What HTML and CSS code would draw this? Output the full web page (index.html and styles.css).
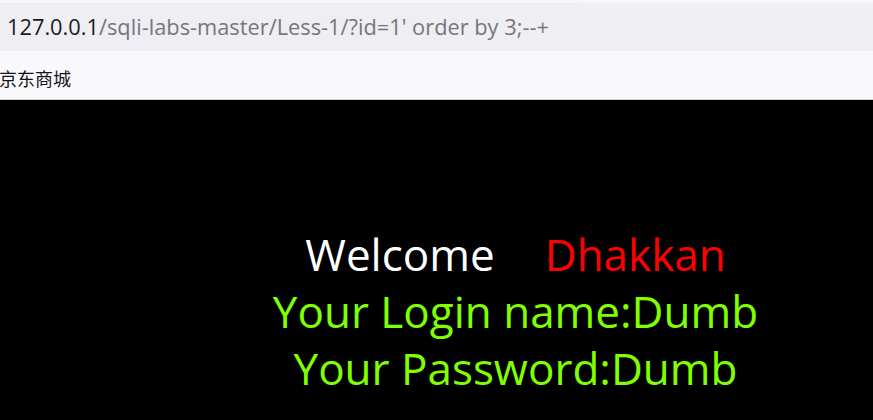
FILE: index.html
```html
<!DOCTYPE html>
<html>
<head>
<meta charset="utf-8">
<link rel="stylesheet" href="styles.css">
</head>
<body>
<div class="chrome">
  <div class="addressbar">
    <div class="url"><span class="host">127.0.0.1</span><span class="path">/sqli-labs-master/Less-1/?id=1' order by 3;--+</span></div>
    <div class="url-rest"></div>
  </div>
  <div class="bookmarks"><span class="bm">京东商城</span></div>
</div>
<div class="page">
  <div class="msg">
    <div class="line"><span class="welcome">Welcome</span><span class="gap"></span><span class="name">Dhakkan</span></div>
    <div class="line green">Your Login name:Dumb</div>
    <div class="line green">Your Password:Dumb</div>
  </div>
</div>
</body>
</html>
```
FILE: styles.css
```css
html, body {
  margin: 0;
  padding: 0;
  background: #000;
  height: 100%;
  overflow: hidden;
}
.chrome {
  background: #f7f7f9;
  padding-top: 3px;
  font-family: "Open Sans", "Noto Sans CJK SC", sans-serif;
}
.addressbar {
  height: 48px;
  background: #efeef3;
  display: flex;
}
.url {
  width: 579px;
  box-sizing: border-box;
  padding-left: 7px;
  font-size: 21.8px;
  line-height: 48px;
  white-space: nowrap;
}
.url-rest {
  flex: 1;
  height: 37px;
  background: #f0f0f3;
}
.host { color: #1c1b22; }
.path { color: #77767c; }
.bookmarks {
  height: 48px;
  background: #f9f9fb;
  border-bottom: 1px solid #cfcfd3;
  display: flex;
  align-items: center;
}
.bm {
  font-family: "Noto Sans CJK SC", sans-serif;
  font-size: 18px;
  color: #15141a;
  margin-left: -1px;
  padding-top: 6px;
}
.page {
  background: #000;
  padding-top: 126px;
  padding-left: 158px;
}
.msg {
  font-family: "Open Sans", sans-serif;
  font-size: 44px;
  line-height: 57px;
  text-align: center;
  color: #fff;
  width: 715px;
}
.line { white-space: nowrap; }
.welcome { color: #fff; }
.gap { display: inline-block; width: 50px; }
.name { color: #ff0000; }
.green { color: #7fff00; }
```
